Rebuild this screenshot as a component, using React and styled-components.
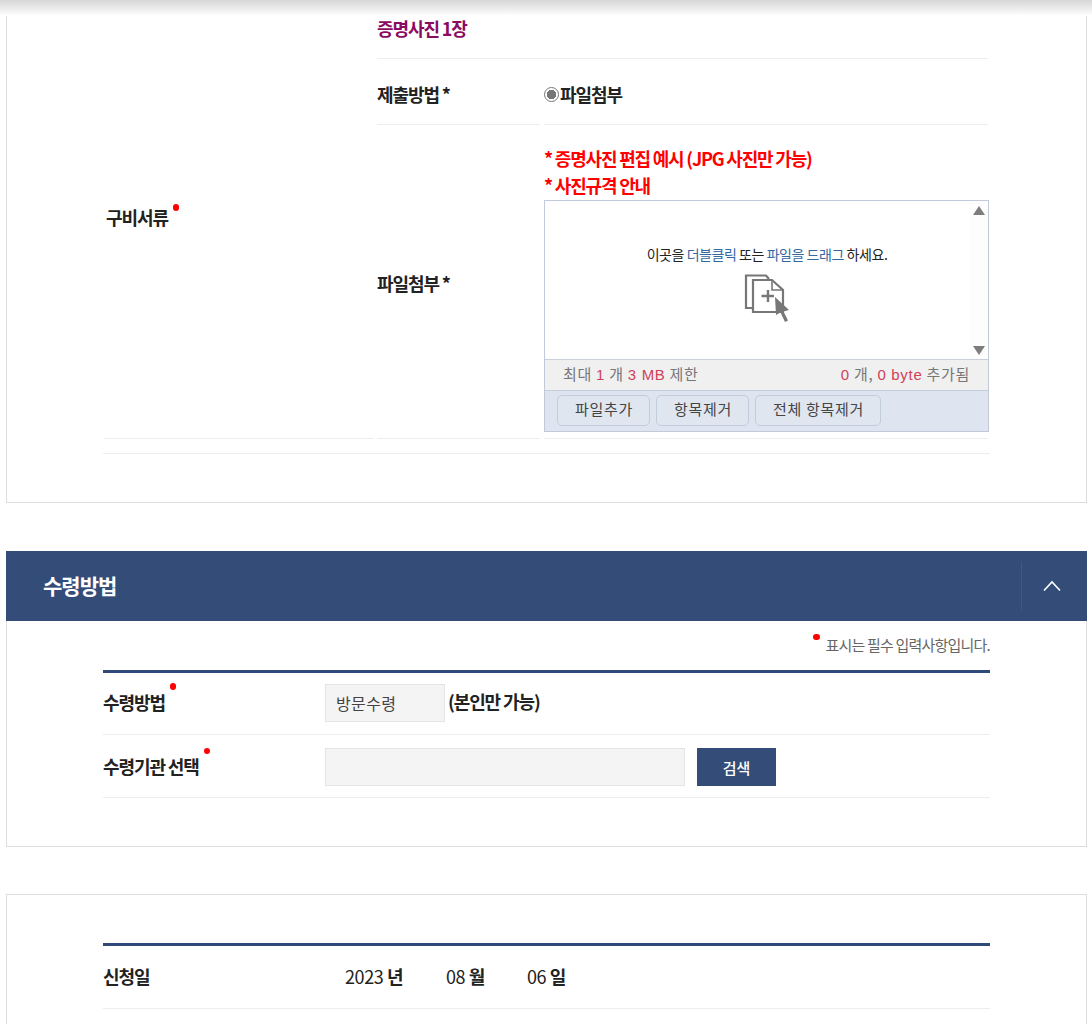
import * as React from 'react'
import styled, { createGlobalStyle } from "styled-components"

const Global = createGlobalStyle`
html, body {margin:0; padding:0; background:#fff; overflow:hidden; height:1024px;}
body {font-family:"Noto Sans CJK KR","Noto Sans",sans-serif; color:#222;}
* {box-sizing:border-box;}
`;

const Page = styled.div`
position:relative;
height:1024px;
overflow:hidden;
padding:0 5px 0 6px;
`;

const TopShadow = styled.div`
position:absolute;
top:0; left:0; right:0;
height:16px;
background:linear-gradient(#d6d6d6, #fff);
`;

const Panel = styled.section`
border:1px solid #ddd;
border-top:${p => p.$top ? "1px solid #ddd" : "none"};
padding:${p => p.$pad || "0 96px"};
`;

const Gap = styled.div`
height:${p => p.$h}px;
`;

const Label = styled.span`
font-size:18px;
font-weight:700;
letter-spacing:-1.1px;
color:#222;
white-space:nowrap;
`;

const Dot = styled.i`
display:inline-block;
position:relative;
top:-${p => p.$up ?? 14}px;
width:6.5px; height:6.5px;
border-radius:50%;
background:#f00;
margin-left:${p => p.$ml ?? 5}px;
margin-right:${p => p.$mr ?? 0}px;
`;

const Docs = styled.div`
border-bottom:1px solid #eee;
padding-bottom:14px;
display:flex;
`;

const DocsLabel = styled.div`
width:270px;
margin:0 3px 0 1px;
padding:0 0 5px 2px;
display:flex;
align-items:center;
border-bottom:1px solid #eee;
`;

const SubTable = styled.div`
width:611px;
`;

const SubRow = styled.div`
display:flex;
height:${p => p.$h ? p.$h + "px" : "auto"};
`;

const SubLabel = styled.div`
flex:0 0 163px;
margin-right:4px;
padding-top:${p => p.$pt || 0}px;
display:flex;
align-items:center;
border-bottom:1px solid #eee;
`;

const SubValue = styled.div`
flex:1;
min-width:0;
display:flex;
flex-direction:column;
justify-content:${p => p.$top ? "flex-start" : "center"};
padding-top:${p => p.$top ? "20px" : "5px"};
border-bottom:1px solid #eee;
`;

const Photo = styled.div`
width:100%;
height:59px;
padding-bottom:2px;
display:flex;
align-items:center;
border-bottom:1px solid #eee;
font-size:18px;
font-weight:700;
letter-spacing:-1.1px;
color:#8b0b62;
`;

const Radio = styled.span`
display:flex;
align-items:center;
font-size:18px;
font-weight:700;
letter-spacing:-1.1px;
color:#222;
`;

const RadioMark = styled.i`
width:15px;
height:15px;
margin-right:1px;
border-radius:50%;
border:1.5px solid #777;
background:radial-gradient(circle, #777 0 4.500px, #fff 5px);
`;

const Notice = styled.div`
font-size:18px;
font-weight:700;
letter-spacing:-1.2px;
line-height:27px;
padding-bottom:${p => p.$pb || 0}px;
color:#f00;
white-space:nowrap;
`;

const Uploader = styled.div`
flex:none;
width:445px;
height:232px;
margin-bottom:6px;
border:1px solid #c1c9da;
display:flex;
flex-direction:column;
`;

const DropArea = styled.div`
height:159px;
display:flex;
border-bottom:1px solid #c9d0dc;
`;

const DropBody = styled.div`
flex:1;
display:flex;
flex-direction:column;
align-items:center;
padding-top:43px;
padding-left:20px;
font-size:14px;
line-height:20px;
letter-spacing:-.45px;
color:#222;
svg {margin-top:10px; margin-left:-1px;}
`;

const Blue = styled.span`
color:#33699f;
`;

const Scroll = styled.div`
width:19px;
background:#fdfdfd;
display:flex;
flex-direction:column;
justify-content:space-between;
align-items:center;
padding:5px 0 4px;
`;

const Arrow = styled.i`
width:0; height:0;
border-left:6px solid transparent;
border-right:6px solid transparent;
${p => p.$down ? "border-top:9px solid #7d7d7d;" : "border-bottom:9px solid #7d7d7d;"}
`;

const Status = styled.div`
height:31px;
background:#f0f0f0;
border-bottom:1px solid #c4cedd;
display:flex;
justify-content:space-between;
align-items:center;
padding:0 18px 3px;
font-size:15px;
letter-spacing:.7px;
color:#777;
`;

const Red = styled.b`
font-family:"Liberation Sans",sans-serif;
font-weight:400;
color:#cf4159;
`;

const Toolbar = styled.div`
flex:1;
background:#dfe5f0;
display:flex;
gap:6px;
padding:4px 12px 0;
`;

const ToolButton = styled.button`
height:31px;
width:${p => p.$w}px;
padding:0 0 4px 1px;
border:1px solid #c2cddb;
border-radius:5px;
background:#dfe6f0;
font:15px "Noto Sans CJK KR",sans-serif;
letter-spacing:.7px;
color:#444;
`;

const Header = styled.header`
height:70px;
background:#334d78;
margin:0;
display:flex;
align-items:center;
justify-content:space-between;
padding-left:37px;
color:#fff;
`;

const HeaderTitle = styled.h2`
margin:0;
padding-bottom:2px;
font-size:21px;
font-weight:700;
letter-spacing:-1px;
`;

const Toggle = styled.div`
width:66px;
height:48px;
padding-right:5px;
border-left:1px solid #3f5884;
display:flex;
align-items:center;
justify-content:center;
`;

const Legend = styled.div`
height:49px;
padding-top:13px;
text-align:right;
font-size:15px;
letter-spacing:-.8px;
color:#666;
`;

const FormTable = styled.div`
border-top:3px solid #2f4a78;
`;

const FormRow = styled.div`
height:${p => p.$h || 63}px;
padding:${p => p.$pad || "0"};
display:flex;
align-items:center;
border-bottom:1px solid #eee;
`;

const FormLabel = styled.div`
width:222px;
padding-bottom:2px;
`;

const ReadBox = styled.div`
width:${p => p.$w}px;
height:38px;
background:#f4f4f4;
border:1px solid #e4e4e4;
display:flex;
align-items:center;
padding-left:10px;
font-size:16px;
letter-spacing:.4px;
color:#444;
`;

const Hint = styled.span`
margin-left:3px;
padding-bottom:4px;
font-size:18px;
font-weight:700;
letter-spacing:-1.1px;
`;

const SearchButton = styled.button`
width:79px;
height:38px;
margin-left:12px;
padding:0;
border:none;
background:#334d78;
color:#fff;
font:15px "Noto Sans CJK KR",sans-serif;
font-weight:500;
`;

const DateRow = styled.div`
display:flex;
align-items:center;
padding:0 0 2px 20px;
font-size:18px;
letter-spacing:-.4px;
color:#222;
`;

const DatePart = styled.span`
width:${p => p.$w}px;
b {font-weight:700;}
`;

const DropIcon = () => (
    <svg width="46" height="48" viewBox="0 0 46 48" fill="none">
        <path d="M8 34H2V1.500h20l3 3.500" stroke="#777" strokeWidth="2.2" />
        <path d="M9 6h19l11 10v22H9z" fill="#fff" stroke="#777" strokeWidth="2.2" />
        <path d="M28 6.500V16h10" stroke="#777" strokeWidth="1.6" />
        <path d="M17.500 22H30M24 16v12" stroke="#777" strokeWidth="2.4" />
        <path d="M31 23l14 13-5.500 1.500 4.500 9-3 1.500-4.500-9.500-4.500 2.500z" fill="#777" />
    </svg>
);

const Chevron = () => (
    <svg width="18" height="12" viewBox="0 0 18 12" fill="none">
        <path d="M1 10.500L9 2l8 8.500" stroke="#fff" strokeWidth="1.600" />
    </svg>
);

const App = () => {

    return (
        <Page>
            <Global />
            <Panel>
                <Docs>
                    <DocsLabel>
                        <Label>구비서류<Dot /></Label>
                    </DocsLabel>
                    <SubTable>
                        <Photo>증명사진 1장</Photo>
                        <SubRow $h={66}>
                            <SubLabel $pt={5}><Label>제출방법 *</Label></SubLabel>
                            <SubValue><Radio><RadioMark />파일첨부</Radio></SubValue>
                        </SubRow>
                        <SubRow>
                            <SubLabel $pt={3}><Label>파일첨부 *</Label></SubLabel>
                            <SubValue $top>
                                <Notice>* 증명사진 편집 예시 (JPG 사진만 가능)</Notice>
                                <Notice $pb={1}>* 사진규격 안내</Notice>
                                <Uploader>
                                    <DropArea>
                                        <DropBody>
                                            <div>이곳을 <Blue>더블클릭</Blue> 또는 <Blue>파일을 드래그</Blue> 하세요.</div>
                                            <DropIcon />
                                        </DropBody>
                                        <Scroll>
                                            <Arrow />
                                            <Arrow $down />
                                        </Scroll>
                                    </DropArea>
                                    <Status>
                                        <span>최대 <Red>1</Red> 개 <Red>3 MB</Red> 제한</span>
                                        <span><Red>0</Red> 개, <Red>0 byte</Red> 추가됨</span>
                                    </Status>
                                    <Toolbar>
                                        <ToolButton $w={93}>파일추가</ToolButton>
                                        <ToolButton $w={93}>항목제거</ToolButton>
                                        <ToolButton $w={126}>전체 항목제거</ToolButton>
                                    </Toolbar>
                                </Uploader>
                            </SubValue>
                        </SubRow>
                    </SubTable>
                </Docs>
                <Gap $h={48} />
            </Panel>
            <Gap $h={48} />
            <Header>
                <HeaderTitle>수령방법</HeaderTitle>
                <Toggle><Chevron /></Toggle>
            </Header>
            <Panel>
                <Legend><Dot $ml={0} $mr={3} $up={11} /> 표시는 필수 입력사항입니다.</Legend>
                <FormTable>
                    <FormRow $h={62} $pad="0 0 2px">
                        <FormLabel><Label>수령방법<Dot $up={20} /></Label></FormLabel>
                        <ReadBox $w={120}>방문수령</ReadBox>
                        <Hint>(본인만 가능)</Hint>
                    </FormRow>
                    <FormRow $pad="2px 0 0">
                        <FormLabel><Label>수령기관 선택<Dot $up={20} /></Label></FormLabel>
                        <ReadBox $w={360} />
                        <SearchButton>검색</SearchButton>
                    </FormRow>
                </FormTable>
                <Gap $h={48} />
            </Panel>
            <Gap $h={47} />
            <Panel $top $pad="48px 96px 0">
                <FormTable>
                    <FormRow>
                        <FormLabel><Label>신청일</Label></FormLabel>
                        <DateRow>
                            <DatePart $w={101}>2023 <b>년</b></DatePart>
                            <DatePart $w={81}>08 <b>월</b></DatePart>
                            <DatePart $w={60}>06 <b>일</b></DatePart>
                        </DateRow>
                    </FormRow>
                </FormTable>
                <Gap $h={60} />
            </Panel>
            <TopShadow />
        </Page>
    )
}

export default App
